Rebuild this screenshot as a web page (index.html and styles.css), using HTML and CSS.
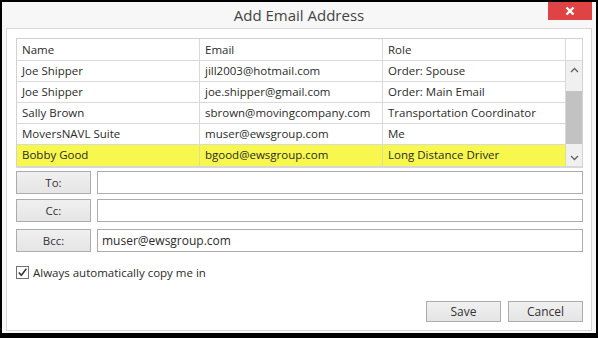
FILE: index.html
```html
<!DOCTYPE html>
<html>
<head>
<meta charset="utf-8">
<link rel="stylesheet" href="styles.css">
</head>
<body>
<div class="window">
  <div class="titlebar">
    <div class="title">Add Email Address</div>
    <div class="close"><svg width="10" height="10" viewBox="0 0 10 10"><path d="M1.5 1.5 L8.5 8.5 M8.5 1.5 L1.5 8.5" stroke="#fff" stroke-width="2.4"/></svg></div>
  </div>
  <div class="panel">
    <div class="grid">
      <div class="cell head">Name</div>
      <div class="cell head">Email</div>
      <div class="cell head">Role</div>
      <div class="cell head corner"></div>

      <div class="cell">Joe Shipper</div>
      <div class="cell">jill2003@hotmail.com</div>
      <div class="cell">Order: Spouse</div>
      <div class="scroll">
        <div class="arrow"><svg width="9" height="6" viewBox="0 0 9 6"><path d="M1 5 L4.5 1.5 L8 5" fill="none" stroke="#606060" stroke-width="1.3"/></svg></div>
        <div class="track"><div class="thumb"></div></div>
        <div class="arrow down"><svg width="9" height="6" viewBox="0 0 9 6"><path d="M1 1 L4.5 4.5 L8 1" fill="none" stroke="#606060" stroke-width="1.3"/></svg></div>
      </div>

      <div class="cell">Joe Shipper</div>
      <div class="cell">joe.shipper@gmail.com</div>
      <div class="cell">Order: Main Email</div>

      <div class="cell">Sally Brown</div>
      <div class="cell">sbrown@movingcompany.com</div>
      <div class="cell">Transportation Coordinator</div>

      <div class="cell">MoversNAVL Suite</div>
      <div class="cell">muser@ewsgroup.com</div>
      <div class="cell">Me</div>

      <div class="cell sel">Bobby Good</div>
      <div class="cell sel">bgood@ewsgroup.com</div>
      <div class="cell sel">Long Distance Driver</div>
    </div>

    <div class="fields">
      <div class="field">
        <div class="btn lbl">To:</div>
        <div class="input"></div>
      </div>
      <div class="field">
        <div class="btn lbl">Cc:</div>
        <div class="input"></div>
      </div>
      <div class="field bcc">
        <div class="btn lbl">Bcc:</div>
        <div class="input">muser@ewsgroup.com</div>
      </div>
    </div>

    <div class="check">
      <span class="box"><svg width="11" height="11" viewBox="0 0 11 11"><path d="M1.8 5.6 L4.3 8.3 L9.4 1.8" fill="none" stroke="#333" stroke-width="1.5"/></svg></span>
      <span>Always automatically copy me in</span>
    </div>

    <div class="actions">
      <div class="btn act">Save</div>
      <div class="btn act">Cancel</div>
    </div>
  </div>
</div>
</body>
</html>
```
FILE: styles.css
```css
html, body {
  margin: 0;
  padding: 0;
}
body {
  width: 598px;
  height: 338px;
  background: #000;
  font-family: "Open Sans", "Noto Sans", sans-serif;
  font-size: 11.5px;
  color: #2b2b2b;
}
.window {
  box-sizing: border-box;
  width: 598px;
  height: 338px;
  border-style: solid;
  border-color: #000;
  border-width: 2px 2px 5px 2px;
  background: #f7f7f7;
  display: flex;
  flex-direction: column;
}
.titlebar {
  height: 26px;
  display: flex;
  position: relative;
  justify-content: center;
}
.title {
  font-size: 15px;
  color: #444;
  line-height: 26px;
}
.close {
  position: absolute;
  right: 4px;
  top: 0;
  width: 44px;
  height: 18px;
  background: #e04343;
  display: flex;
  align-items: center;
  justify-content: center;
}
.panel {
  margin: 0 4px 2px 4px;
  flex: 1;
  background: #fff;
  border: 1px solid #d7d7d7;
  padding: 9px 8px 8px 9px;
  display: flex;
  flex-direction: column;
}
.grid {
  display: grid;
  grid-template-columns: 183px 183px 183px 1fr;
  grid-template-rows: 22px repeat(5, 21px);
  border: 1px solid #d2d2d2;
  border-bottom: 2px solid #d8d8d8;
}
.cell {
  border-right: 1px solid #d9d9d9;
  border-bottom: 1px solid #d9d9d9;
  padding-left: 5px;
  line-height: 20px;
  white-space: nowrap;
  overflow: hidden;
}
.cell.head {
  line-height: 21px;
}
.cell.corner {
  border-right: none;
}
.cell.sel {
  background: #f7f74e;
  border-right-color: #e0e090;
  border-bottom: none;
}
.scroll {
  grid-column: 4;
  grid-row: 2 / 7;
  background: #f0f0f0;
  display: flex;
  flex-direction: column;
}
.arrow {
  height: 17px;
  display: flex;
  align-items: center;
  justify-content: center;
}
.track {
  flex: 1;
  padding-top: 13px;
}
.thumb {
  height: 53px;
  background: #c2c2c2;
}
.fields {
  display: flex;
  flex-direction: column;
  gap: 5px;
  margin-top: 3px;
}
.field {
  display: flex;
  gap: 6px;
  height: 23px;
}
.field.bcc {
  margin-top: 2px;
}
.btn {
  box-sizing: border-box;
  border: 1px solid #acacac;
  background: linear-gradient(#f0f0f0, #e5e5e5);
  display: flex;
  align-items: center;
  justify-content: center;
  color: #333;
}
.lbl {
  width: 75px;
}
.input {
  flex: 1;
  box-sizing: border-box;
  border: 1px solid #acacac;
  background: #fff;
  padding-left: 4px;
  display: flex;
  align-items: center;
  font-size: 12px;
}
.check {
  display: flex;
  align-items: center;
  gap: 4px;
  margin-top: 13px;
  font-size: 11.5px;
}
.box {
  box-sizing: border-box;
  width: 13px;
  height: 13px;
  border: 1px solid #707070;
  display: flex;
  align-items: center;
  justify-content: center;
}
.actions {
  margin-top: auto;
  display: flex;
  justify-content: flex-end;
  gap: 7px;
}
.act {
  width: 75px;
  height: 21px;
  font-size: 12px;
}
```
